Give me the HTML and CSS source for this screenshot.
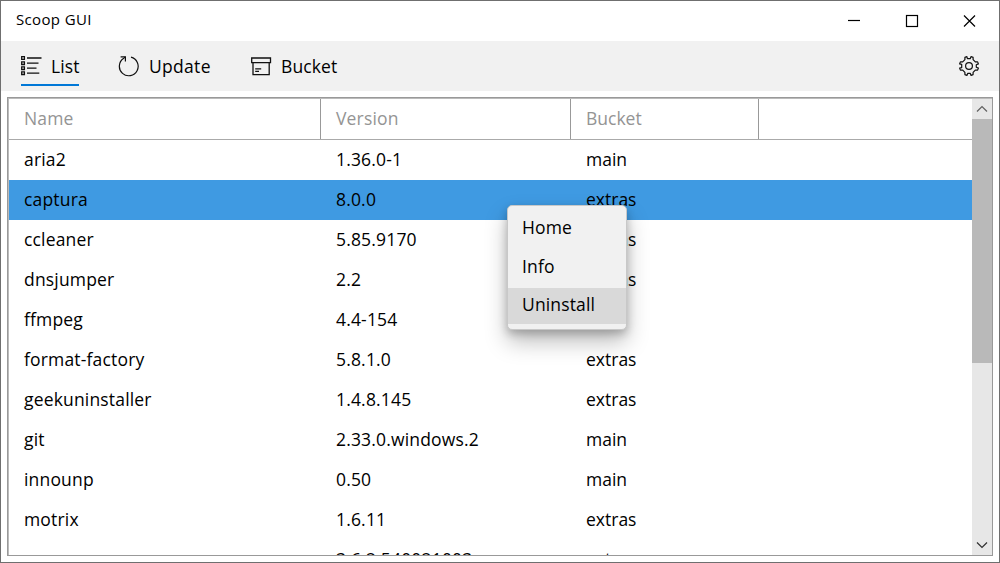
FILE: index.html
```html
<!DOCTYPE html>
<html lang="en">
<head>
<meta charset="utf-8">
<title>Scoop GUI</title>
<link rel="stylesheet" href="styles.css">
</head>
<body>
<div class="window">
  <header class="titlebar">
    <span class="title">Scoop GUI</span>
    <svg class="controls" width="180" height="40" viewBox="0 0 180 40" fill="none" stroke="#000" stroke-width="1.2">
      <path d="M29 19.5h12"/>
      <rect x="87.5" y="14.5" width="11" height="11"/>
      <path d="M145 14.5l11 11M156 14.5l-11 11"/>
    </svg>
  </header>
  <nav class="toolbar">
    <a class="tab tab-list active">
      <svg width="21" height="20" viewBox="0 0 21 20" fill="none" stroke="#111" stroke-width="1.3">
        <path d="M.7.7h2.7v2.7H.7zM.7 5.8h2.7v2.7H.7zM.7 10.8h2.7v2.7H.7zM.7 15.8h2.7v2.7H.7z"/>
        <path d="M6 2h14.5M6 7.1h11.5M6 12.1h9.5M6 17.2h12.3"/>
      </svg>
      <span>List</span>
    </a>
    <a class="tab tab-update">
      <svg width="21" height="21" viewBox="0 0 21 21" fill="none" stroke="#111" stroke-width="1.2">
        <path d="M13 1.2A9.4 9.4 0 1 1 5.4 2.6L7.3.9"/>
        <path d="M2.6.9h4.8v4.6"/>
      </svg>
      <span>Update</span>
    </a>
    <a class="tab tab-bucket">
      <svg width="21" height="19" viewBox="0 0 21 19" fill="none" stroke="#111" stroke-width="1.3">
        <path d="M.7 1h18.8v4.6H.7zM2 5.6v12h16.2v-12M4.2 11.8h6M4.2 14.3h3.8"/>
      </svg>
      <span>Bucket</span>
    </a>
    <svg class="settings" width="22" height="22" viewBox="-11 -11 22 22" fill="none" stroke="#111" stroke-width="1.2" stroke-linejoin="round">
      <circle r="3.4"/>
      <path id="gear" d="M-1.6-7.3L-2.1-9.4 -4.1-8.6 -4.1-6.3 -6.3-4.1 -8.6-4.1 -9.4-2.1 -7.3-1.6 -7.3 1.6 -9.4 2.1 -8.6 4.1 -6.3 4.1 -4.1 6.3 -4.1 8.6 -2.1 9.4 -1.2 7.3 1.2 7.3 2.1 9.4 4.1 8.6 4.1 6.3 6.3 4.1 8.6 4.1 9.4 2.1 7.3 1.2 7.3-1.2 9.4-2.1 8.6-4.1 6.3-4.1 4.1-6.3 4.1-8.6 2.1-9.4 1.2-7.3z"/>
    </svg>
  </nav>
  <main class="table">
    <div class="grid">
      <div class="row head"><span>Name</span><span>Version</span><span>Bucket</span><span></span></div>
      <div class="row"><span>aria2</span><span>1.36.0-1</span><span>main</span></div>
      <div class="row selected"><span>captura</span><span>8.0.0</span><span>extras</span></div>
      <div class="row"><span>ccleaner</span><span>5.85.9170</span><span>extras</span></div>
      <div class="row"><span>dnsjumper</span><span>2.2</span><span>extras</span></div>
      <div class="row"><span>ffmpeg</span><span>4.4-154</span><span>main</span></div>
      <div class="row"><span>format-factory</span><span>5.8.1.0</span><span>extras</span></div>
      <div class="row"><span>geekuninstaller</span><span>1.4.8.145</span><span>extras</span></div>
      <div class="row"><span>git</span><span>2.33.0.windows.2</span><span>main</span></div>
      <div class="row"><span>innounp</span><span>0.50</span><span>main</span></div>
      <div class="row"><span>motrix</span><span>1.6.11</span><span>extras</span></div>
      <div class="row"><span></span><span>3.6.2.540021003</span><span>extras</span></div>
    </div>
    <div class="scrollbar">
      <svg width="20" height="20" viewBox="0 0 20 20" fill="none" stroke="#606060" stroke-width="1.2"><path d="M5 12.5l5-5 5 5"/></svg>
      <div class="thumb"></div>
      <svg width="20" height="20" viewBox="0 0 20 20" fill="none" stroke="#303030" stroke-width="1.2"><path d="M5 7.5l5 5 5-5"/></svg>
    </div>
  </main>
</div>
<div class="menu">
  <div class="item">Home</div>
  <div class="item">Info</div>
  <div class="item hover">Uninstall</div>
</div>
</body>
</html>
```

FILE: styles.css
```css
* { box-sizing: border-box; }
body {
  margin: 0;
  font-family: "Open Sans", "Noto Sans", sans-serif;
  font-size: 17.5px;
  color: #000;
}
.window {
  width: 1000px;
  height: 563px;
  display: flex;
  flex-direction: column;
  border: 1px solid #6f6f6f;
  background: #fff;
  overflow: hidden;
}
.titlebar {
  height: 40px;
  flex: none;
  display: flex;
  justify-content: space-between;
  padding-left: 15px;
}
.title { font-size: 15px; line-height: 37px; letter-spacing: .35px; }
.controls { flex: none; }
.toolbar {
  height: 50px;
  flex: none;
  display: flex;
  background: #f1f1f1;
  padding-left: 20px;
  padding-right: 19px;
}
.tab { display: flex; height: 45px; line-height: 50px; letter-spacing: .1px; }
.tab svg { flex: none; margin-top: 14px; }
.tab span { margin-left: 9px; white-space: nowrap; }
.tab-list { width: 58px; border-bottom: 2px solid #0078d7; }
.tab-list svg { margin-top: 15px; }
.tab-update { margin-left: 39px; width: 93px; letter-spacing: .3px; }
.tab-update svg { margin-top: 15px; }
.tab-update span { margin-left: 10px; }
.tab-bucket { margin-left: 40px; }
.tab-bucket svg { margin-top: 16px; }
.settings { margin: 14px 0 0 auto; }
.table {
  flex: none;
  width: 986px;
  height: 459px;
  margin: 6px 0 0 6px;
  display: flex;
  border: 1px solid #999;
  box-shadow: inset 1px 1px #bbb;
  padding: 1px 0 0 1px;
  overflow: hidden;
}
.grid { width: 963px; flex: none; }
.row {
  display: grid;
  grid-template-columns: 312px 250px 188px 1fr;
  height: 40px;
  line-height: 38px;
  letter-spacing: .17px;
}
.row span { padding-left: 15px; white-space: nowrap; }
.row span:nth-child(3) { letter-spacing: 0; }
.head {
  height: 41px;
  width: 983px;
  color: #949494;
  border-bottom: 1px solid #aaa;
}
.head span:not(:last-child) { border-right: 1px solid #999; }
.selected { background: #3f9ae2; width: 983px; }
.scrollbar {
  position: relative;
  z-index: 1;
  width: 20px;
  height: 456px;
  display: flex;
  flex-direction: column;
  justify-content: space-between;
  background: #e7e7e7;
}
.scrollbar svg { flex: none; }
.thumb { height: 244px; flex: none; margin-bottom: auto; background: #b9b9b9; }
.menu {
  position: absolute;
  left: 507px;
  top: 205px;
  width: 120px;
  height: 125px;
  padding: 4px 0;
  background: #f1f1f1;
  border: 1px solid #c8c8c8;
  border-radius: 5px;
  box-shadow: 0 12px 22px rgba(0,0,0,.25), 0 4px 8px rgba(0,0,0,.22);
}
.item { height: 39px; line-height: 35px; padding-left: 14px; letter-spacing: .15px; }
.item.hover { height: 36px; line-height: 32px; background: #d9d9d9; }
```
